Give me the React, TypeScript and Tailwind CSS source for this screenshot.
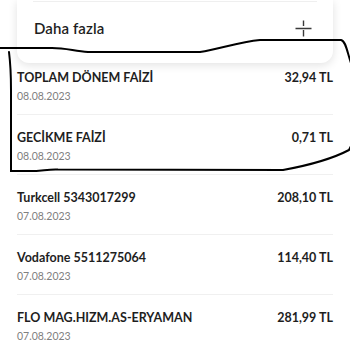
import React from "react";

const rows = [
  { title: "TOPLAM DÖNEM FAİZİ", date: "08.08.2023", amount: "32,94 TL" },
  { title: "GECİKME FAİZİ", date: "08.08.2023", amount: "0,71 TL" },
  { title: "Turkcell 5343017299", date: "07.08.2023", amount: "208,10 TL" },
  { title: "Vodafone 5511275064", date: "07.08.2023", amount: "114,40 TL" },
  { title: "FLO MAG.HIZM.AS-ERYAMAN", date: "07.08.2023", amount: "281,99 TL" },
];

export default function App() {
  return (
    <div
      className="relative w-[350px] h-[350px] overflow-hidden bg-white text-[#1e1e1e]"
      style={{ fontFamily: "Lato, 'Noto Sans', sans-serif" }}
    >
      <div className="relative z-0 mx-[17px] h-[63px] rounded-b-[12px] bg-white shadow-[0_2px_10px_rgba(0,0,0,0.12)]">
        <div className="mx-[16px] pt-[1px]">
          <div className="border-t border-[#efefef]" />
        </div>
        <div className="flex h-[53px] items-center justify-between pl-[17px] pr-[21px]">
          <span className="text-[15px] font-semibold tracking-[0.1px]">Daha fazla</span>
          <svg width="17" height="17" viewBox="0 0 17 17" className="text-[#3a3a3a]">
            <path d="M0.5 8.5H16.5M8.5 0.5V6M8.5 10V16.5" stroke="currentColor" strokeWidth="1.4" fill="none" />
          </svg>
        </div>
      </div>

      <div className="relative mt-[-8px]">
        {rows.map((r) => (
          <div key={r.title} className="mx-[17px] h-[60px] border-b border-[#f0f0f0] pt-[14px]">
            <div className="flex items-center justify-between">
              <span className="text-[12.5px] font-bold leading-[18px]">{r.title}</span>
              <span className="text-[12.5px] font-bold leading-[18px]">{r.amount}</span>
            </div>
            <div className="text-[10.5px] leading-[18px] text-[#808080]">{r.date}</div>
          </div>
        ))}
      </div>

      <svg
        className="pointer-events-none absolute left-0 top-0"
        width="350"
        height="350"
        viewBox="0 0 350 350"
      >
        <path
          d="M-2 48 L52 48 C66 48 74 51 88 52 L200 52 C222 48 240 42 260 40 L341 40 C346 41 347 52 352 66"
          stroke="#000"
          strokeWidth="2"
          fill="none"
          strokeLinecap="round"
        />
        <path
          d="M9 52 C10 60 11 70 11 90 L11 171 L30 171 C42 171 48 169 58 169.5 L283 170 C305 166 330 160 349 150 L354 140"
          stroke="#000"
          strokeWidth="2"
          fill="none"
          strokeLinecap="round"
        />
      </svg>
    </div>
  );
}
